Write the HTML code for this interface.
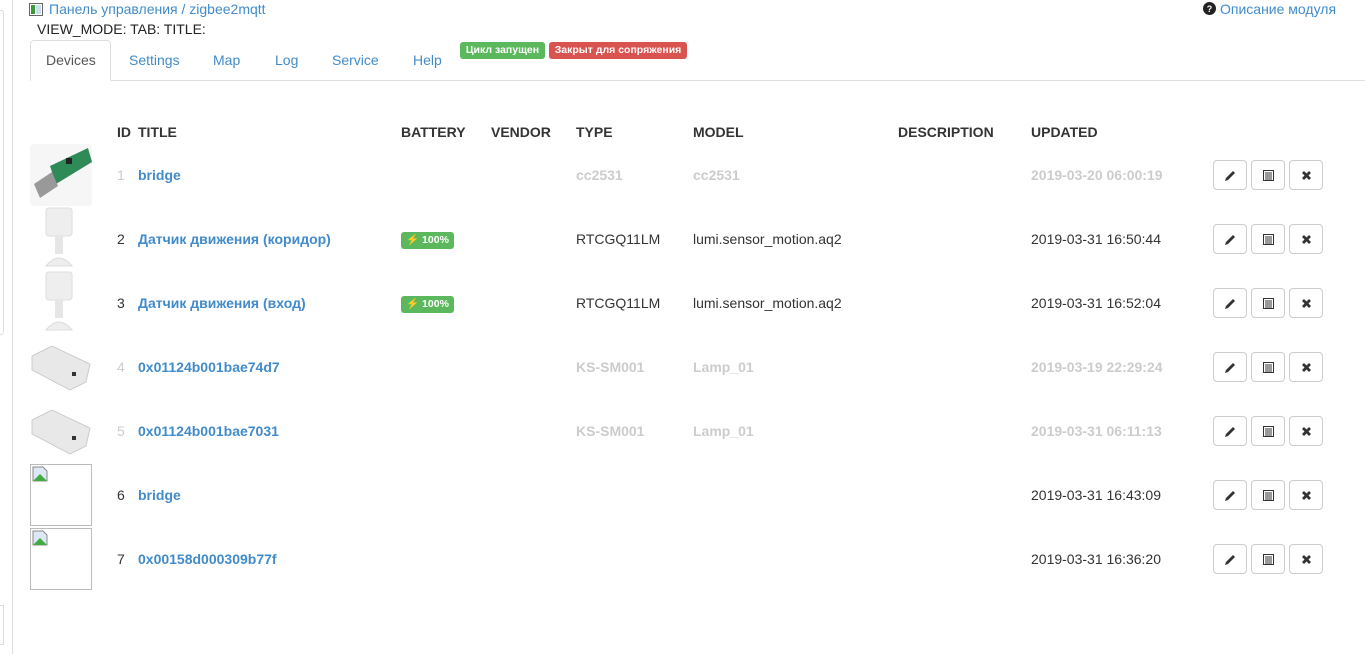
<!DOCTYPE html>
<html><head><meta charset="utf-8"><style>
*{box-sizing:border-box}
body{margin:0;width:1365px;height:654px;overflow:hidden;background:#fff;font-family:"Liberation Sans",Arial,sans-serif;font-size:14px;color:#333;position:relative}
.a{position:absolute;white-space:nowrap}
a,.lk{color:#428bca;text-decoration:none}
.hd{font-weight:bold;color:#333;top:124px}
.t{font-weight:bold;color:#428bca}
.g{color:#ccc;font-weight:bold}
.btn{position:absolute;width:34px;height:30px;border:1px solid #ccc;border-radius:4px;background:#fff}
.btn svg{position:absolute;left:10px;top:8px}
.lbl{position:absolute;background:#5cb85c;color:#fff;font-weight:bold;font-size:10.5px;border-radius:3px;height:17px;line-height:17px;padding:0;width:53px;text-align:center;white-space:nowrap}
.broken{position:absolute;width:62px;height:62px;border:1px solid #bbb;left:30px}
</style></head><body>
<div class="a" style="left:0;top:0;width:13px;height:654px;border-right:1px solid #ddd"></div>
<div class="a" style="left:0;top:10px;width:4px;height:325px;border:1px solid #ddd;border-left:0;border-radius:0 3px 3px 0"></div>
<div class="a" style="left:0;top:605px;width:4px;height:40px;border:1px solid #ddd;border-left:0"></div>

<svg class="a" style="left:29px;top:3px" width="14" height="13"><rect x="0.5" y="0.5" width="13" height="12" fill="#fff" stroke="#666"/><rect x="2" y="2" width="4" height="9" fill="#3a9a3a"/><rect x="7" y="2" width="5" height="9" fill="#cde"/></svg>
<div class="a lk" style="left:49px;top:1px;font-size:14px">Панель управления / zigbee2mqtt</div>
<div class="a" style="left:37px;top:21px;font-size:14px;color:#222">VIEW_MODE: TAB: TITLE:</div>
<svg class="a" style="left:1203px;top:2px" width="13" height="13"><circle cx="6.5" cy="6.5" r="6.5" fill="#222"/><text x="6.5" y="10" font-size="9" fill="#fff" text-anchor="middle" font-weight="bold" font-family="Liberation Sans">?</text></svg>
<div class="a lk" style="left:1220px;top:1px;font-size:14px">Описание модуля</div>

<div class="a" style="left:30px;top:80px;width:1335px;border-top:1px solid #ddd"></div>
<div class="a" style="left:30px;top:40px;width:81px;height:41px;border:1px solid #ddd;border-bottom:1px solid #fff;border-radius:4px 4px 0 0;background:#fff"></div>
<div class="a" style="left:46px;top:52px;font-size:14px;color:#555">Devices</div>
<div class="a lk" style="left:129px;top:52px;font-size:14px">Settings</div>
<div class="a lk" style="left:213px;top:52px;font-size:14px">Map</div>
<div class="a lk" style="left:275px;top:52px;font-size:14px">Log</div>
<div class="a lk" style="left:332px;top:52px;font-size:14px">Service</div>
<div class="a lk" style="left:413px;top:52px;font-size:14px">Help</div>
<div class="a" style="left:460px;top:42px;height:17px;width:85px;background:#5cb85c;border-radius:3px;color:#fff;font-size:10.5px;font-weight:bold;line-height:17px;text-align:center">Цикл запущен</div>
<div class="a" style="left:549px;top:42px;height:17px;width:138px;background:#d9534f;border-radius:3px;color:#fff;font-size:10.5px;font-weight:bold;line-height:17px;text-align:center">Закрыт для сопряжения</div>

<div class="a hd" style="left:117px">ID</div>
<div class="a hd" style="left:138px">TITLE</div>
<div class="a hd" style="left:401px">BATTERY</div>
<div class="a hd" style="left:491px">VENDOR</div>
<div class="a hd" style="left:576px">TYPE</div>
<div class="a hd" style="left:693px">MODEL</div>
<div class="a hd" style="left:898px">DESCRIPTION</div>
<div class="a hd" style="left:1031px">UPDATED</div>

<svg class="a" style="left:30px;top:144px" width="62" height="62"><rect width="62" height="62" rx="4" fill="#f6f6f6"/><polygon points="20,22 58,4 62,18 26,40" fill="#2e8b57"/><polygon points="4,40 22,28 28,42 10,54" fill="#999"/><rect x="36" y="14" width="6" height="6" fill="#222"/></svg>
<svg class="a" style="left:30px;top:206px" width="62" height="62"><rect x="16" y="2" width="26" height="28" rx="3" fill="#eee" stroke="#ddd"/><rect x="25" y="30" width="8" height="18" fill="#e6e6e6"/><path d="M16 60 Q29 44 42 60Z" fill="#eee" stroke="#ddd"/></svg>
<svg class="a" style="left:30px;top:270px" width="62" height="62"><rect x="16" y="2" width="26" height="28" rx="3" fill="#eee" stroke="#ddd"/><rect x="25" y="30" width="8" height="18" fill="#e6e6e6"/><path d="M16 60 Q29 44 42 60Z" fill="#eee" stroke="#ddd"/></svg>
<svg class="a" style="left:30px;top:342px" width="62" height="50"><polygon points="2,14 22,4 60,22 56,40 40,48 2,28" fill="#e8e8e8" stroke="#ccc"/><rect x="42" y="30" width="4" height="4" fill="#333"/></svg>
<svg class="a" style="left:30px;top:406px" width="62" height="50"><polygon points="2,14 22,4 60,22 56,40 40,48 2,28" fill="#e8e8e8" stroke="#ccc"/><rect x="42" y="30" width="4" height="4" fill="#333"/></svg>
<div class="broken" style="top:464px"><svg width="16" height="16" style="position:absolute;left:1px;top:1px"><path d="M1 1h10l4 4v10H1z" fill="#dde8f5" stroke="#888"/><path d="M1 15L8 8l7 7z" fill="#4a4"/></svg></div>
<div class="broken" style="top:528px"><svg width="16" height="16" style="position:absolute;left:1px;top:1px"><path d="M1 1h10l4 4v10H1z" fill="#dde8f5" stroke="#888"/><path d="M1 15L8 8l7 7z" fill="#4a4"/></svg></div>

<div class="a g" style="left:117px;top:167px;font-weight:normal">1</div><div class="a t" style="left:138px;top:167px">bridge</div>
<div class="a g" style="left:576px;top:167px">cc2531</div><div class="a g" style="left:693px;top:167px">cc2531</div><div class="a g" style="left:1031px;top:167px">2019-03-20 06:00:19</div>

<div class="a" style="left:117px;top:231px">2</div><div class="a t" style="left:138px;top:231px">Датчик движения (коридор)</div>
<div class="lbl" style="left:401px;top:232px">⚡ 100%</div>
<div class="a" style="left:576px;top:231px">RTCGQ11LM</div><div class="a" style="left:693px;top:231px">lumi.sensor_motion.aq2</div><div class="a" style="left:1031px;top:231px">2019-03-31 16:50:44</div>

<div class="a" style="left:117px;top:295px">3</div><div class="a t" style="left:138px;top:295px">Датчик движения (вход)</div>
<div class="lbl" style="left:401px;top:296px">⚡ 100%</div>
<div class="a" style="left:576px;top:295px">RTCGQ11LM</div><div class="a" style="left:693px;top:295px">lumi.sensor_motion.aq2</div><div class="a" style="left:1031px;top:295px">2019-03-31 16:52:04</div>

<div class="a g" style="left:117px;top:359px;font-weight:normal">4</div><div class="a t" style="left:138px;top:359px">0x01124b001bae74d7</div>
<div class="a g" style="left:576px;top:359px">KS-SM001</div><div class="a g" style="left:693px;top:359px">Lamp_01</div><div class="a g" style="left:1031px;top:359px">2019-03-19 22:29:24</div>

<div class="a g" style="left:117px;top:423px;font-weight:normal">5</div><div class="a t" style="left:138px;top:423px">0x01124b001bae7031</div>
<div class="a g" style="left:576px;top:423px">KS-SM001</div><div class="a g" style="left:693px;top:423px">Lamp_01</div><div class="a g" style="left:1031px;top:423px">2019-03-31 06:11:13</div>

<div class="a" style="left:117px;top:487px">6</div><div class="a t" style="left:138px;top:487px">bridge</div><div class="a" style="left:1031px;top:487px">2019-03-31 16:43:09</div>
<div class="a" style="left:117px;top:551px">7</div><div class="a t" style="left:138px;top:551px">0x00158d000309b77f</div><div class="a" style="left:1031px;top:551px">2019-03-31 16:36:20</div>

<div id="btns"></div>
<script>
var h='';[160,224,288,352,416,480,544].forEach(function(y){
h+='<div class="btn" style="left:1213px;top:'+y+'px"><svg width="13" height="13"><path d="M1 12L2 9 9 2 11 4 4 11Z" fill="#333"/></svg></div>';
h+='<div class="btn" style="left:1251px;top:'+y+'px"><svg width="13" height="13"><rect x="1.5" y="1.5" width="10" height="10" fill="#fff" stroke="#333"/><path d="M3 4h7M3 6h7M3 8h7M3 10h7" stroke="#333"/></svg></div>';
h+='<div class="btn" style="left:1289px;top:'+y+'px"><svg width="13" height="13"><path d="M3 3L10 10M10 3L3 10" stroke="#333" stroke-width="2.8"/></svg></div>';
});document.getElementById('btns').innerHTML=h;
</script>
</body></html>
